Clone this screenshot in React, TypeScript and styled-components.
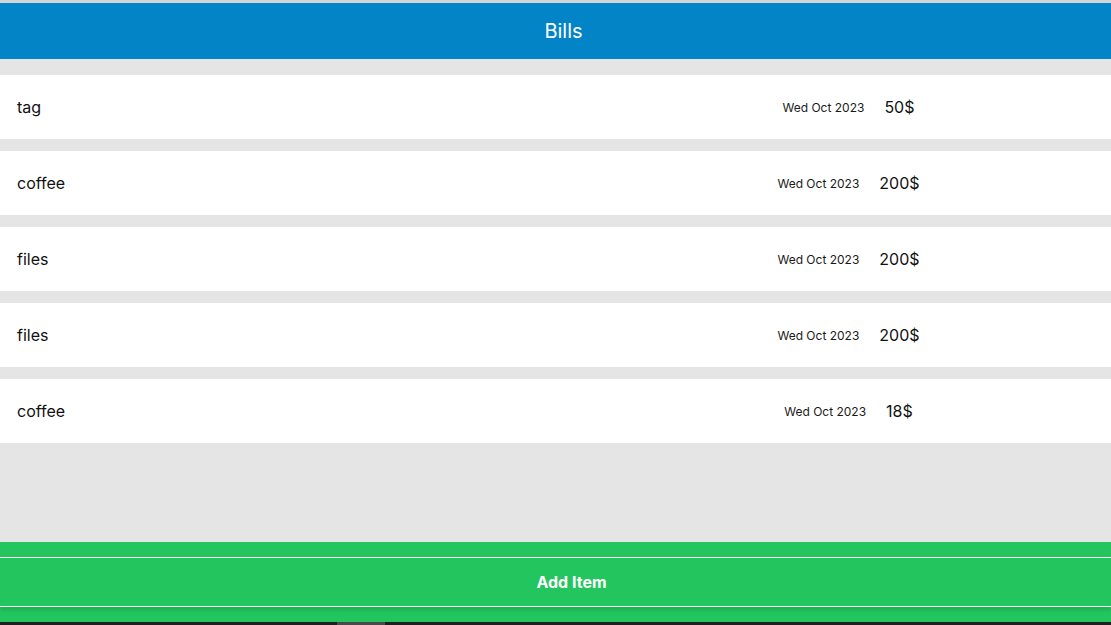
import React from "react";
import styled, { createGlobalStyle } from "styled-components";

const GlobalStyle = createGlobalStyle`
  html, body {
    margin: 0;
    padding: 0;
    background: #e5e5e5;
    font-family: Inter, "Noto Sans", sans-serif;
  }
  * { box-sizing: border-box; }
`;

const Page = styled.div`
  display: flex;
  flex-direction: column;
  height: 625px;
  width: 100%;
  background: #e5e5e5;
  overflow: hidden;
`;

const TopStrip = styled.div`
  height: 3px;
  background: #d4d4d4;
  flex: none;
`;

const Header = styled.header`
  height: 56px;
  flex: none;
  background: #0284c7;
  color: #ffffff;
  display: flex;
  align-items: center;
  justify-content: center;
  padding-left: 16px;
  font-size: 20px;
  font-weight: 400;
`;

const List = styled.main`
  display: flex;
  flex-direction: column;
  gap: 12px;
  padding-top: 16px;
  flex: 1;
`;

const Row = styled.div`
  height: 64px;
  background: #ffffff;
  display: flex;
  align-items: center;
  padding-left: 17px;
  color: #111111;
`;

const Name = styled.span`
  flex: 1;
  font-size: 16px;
`;

const Meta = styled.div`
  width: 525px;
  display: flex;
  align-items: center;
  justify-content: center;
  gap: 20px;
`;

const DateText = styled.span`
  font-size: 12px;
  color: #1a1a1a;
`;

const Amount = styled.span`
  font-size: 16px;
  color: #111111;
`;

const Footer = styled.footer`
  flex: none;
  height: 80px;
  background: #22c55e;
  padding: 15px 0;
`;

const AddButton = styled.button`
  display: flex;
  align-items: center;
  justify-content: center;
  width: 100%;
  height: 50px;
  margin: 0;
  padding: 0 0 0 32px;
  background: #22c55e;
  border: none;
  border-top: 1px solid #ffffff;
  border-bottom: 1px solid #ffffff;
  box-shadow: 0 3px 4px rgba(0, 0, 0, 0.12);
  color: #ffffff;
  font-family: Inter, "Noto Sans", sans-serif;
  font-size: 16px;
  font-weight: 700;
  cursor: pointer;
`;

const BottomBar = styled.div`
  flex: none;
  height: 3px;
  background: #1f1f1f;
  display: flex;
  padding-left: 337px;
`;

const Thumb = styled.div`
  width: 48px;
  background: #4a4a4a;
`;

const bills = [
  { name: "tag", date: "Wed Oct 2023", amount: "50$" },
  { name: "coffee", date: "Wed Oct 2023", amount: "200$" },
  { name: "files", date: "Wed Oct 2023", amount: "200$" },
  { name: "files", date: "Wed Oct 2023", amount: "200$" },
  { name: "coffee", date: "Wed Oct 2023", amount: "18$" },
];

export default function App() {
  return (
    <>
      <GlobalStyle />
      <Page>
        <TopStrip />
        <Header>Bills</Header>
        <List>
          {bills.map((b, i) => (
            <Row key={i}>
              <Name>{b.name}</Name>
              <Meta>
                <DateText>{b.date}</DateText>
                <Amount>{b.amount}</Amount>
              </Meta>
            </Row>
          ))}
        </List>
        <Footer>
          <AddButton>Add Item</AddButton>
        </Footer>
        <BottomBar>
          <Thumb />
        </BottomBar>
      </Page>
    </>
  );
}
